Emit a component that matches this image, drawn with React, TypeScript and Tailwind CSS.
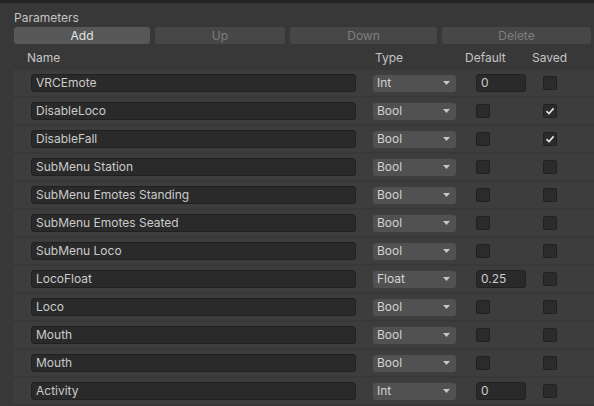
import React from "react";

type ParamType = "Int" | "Bool" | "Float";

interface Param {
  name: string;
  type: ParamType;
  value?: string;
  saved?: boolean;
}

const params: Param[] = [
  { name: "VRCEmote", type: "Int", value: "0" },
  { name: "DisableLoco", type: "Bool", saved: true },
  { name: "DisableFall", type: "Bool", saved: true },
  { name: "SubMenu Station", type: "Bool" },
  { name: "SubMenu Emotes Standing", type: "Bool" },
  { name: "SubMenu Emotes Seated", type: "Bool" },
  { name: "SubMenu Loco", type: "Bool" },
  { name: "LocoFloat", type: "Float", value: "0.25" },
  { name: "Loco", type: "Bool" },
  { name: "Mouth", type: "Bool" },
  { name: "Mouth", type: "Bool" },
  { name: "Activity", type: "Int", value: "0" },
];

function Checkbox({ checked }: { checked?: boolean }) {
  return (
    <div className="w-[14px] h-[14px] rounded-[2px] bg-[#2b2b2b] border border-[#212121] flex items-center justify-center">
      {checked && (
        <svg width="10" height="10" viewBox="0 0 10 10" fill="none">
          <path d="M1.5 5.2 L4 7.6 L8.6 2.4" stroke="#e6e6e6" strokeWidth="1.6" />
        </svg>
      )}
    </div>
  );
}

function Dropdown({ label }: { label: string }) {
  return (
    <div className="w-[83px] h-[17px] rounded-[3px] bg-[#515151] flex items-center justify-between pl-[4px] pr-[6px] text-[#d2d2d2]">
      <span>{label}</span>
      <svg width="7" height="4" viewBox="0 0 7 4">
        <path d="M0 0 H7 L3.5 4 Z" fill="#c8c8c8" />
      </svg>
    </div>
  );
}

function Button({ label, active }: { label: string; active?: boolean }) {
  return (
    <div
      className={
        active
          ? "h-[17px] rounded-[3px] bg-[#585858] text-[#e4e4e4] flex items-center justify-center"
          : "h-[17px] rounded-[3px] bg-[#474747] text-[#7f7f7f] flex items-center justify-center"
      }
    >
      {label}
    </div>
  );
}

function Row({ p }: { p: Param }) {
  return (
    <div className="h-[26px] mb-[2px] ml-[13px] bg-[#3d3d3d] flex items-center">
      <div className="ml-[18px] w-[325px] h-[18px] rounded-[3px] bg-[#2a2a2a] border border-[#212121] flex items-center pl-[4px] text-[#cbcbcb]">
        {p.name}
      </div>
      <div className="ml-[17px]">
        <Dropdown label={p.type} />
      </div>
      <div className="ml-[20px] w-[50px]">
        {p.value !== undefined ? (
          <div className="w-[50px] h-[18px] rounded-[3px] bg-[#2a2a2a] border border-[#212121] flex items-center pl-[4px] text-[#cbcbcb]">
            {p.value}
          </div>
        ) : (
          <Checkbox />
        )}
      </div>
      <div className="ml-[17px]">
        <Checkbox checked={p.saved} />
      </div>
    </div>
  );
}

export default function App() {
  return (
    <div
      className="w-[594px] h-[406px] overflow-hidden bg-[#383838] text-[12px] border-t-[3px] border-[#242424]"
      style={{ fontFamily: "Inter, 'Noto Sans', sans-serif" }}
    >
      <div className="pl-[14px] pt-[8px] h-[24px] text-[#c4c4c4] leading-[14px]">Parameters</div>
      <div className="flex gap-[5px] pl-[14px] pr-[3px]">
        <div className="w-[136px]">
          <Button label="Add" active />
        </div>
        <div className="w-[130px]">
          <Button label="Up" />
        </div>
        <div className="w-[147px]">
          <Button label="Down" />
        </div>
        <div className="flex-1">
          <Button label="Delete" />
        </div>
      </div>
      <div className="h-[26px] pt-[2px] flex items-center text-[#c4c4c4]">
        <span className="ml-[27px] w-[348px]">Name</span>
        <span className="w-[90px]">Type</span>
        <span className="w-[67px]">Default</span>
        <span>Saved</span>
      </div>
      <div>
        {params.map((p, i) => (
          <Row key={i} p={p} />
        ))}
      </div>
    </div>
  );
}
